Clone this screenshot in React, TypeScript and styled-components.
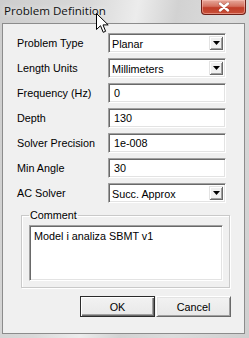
import React from "react";
import styled, { createGlobalStyle } from "styled-components";

const Global = createGlobalStyle`
  html, body { margin: 0; padding: 0; background: #d8d8d8; }
  * { box-sizing: border-box; }
`;

const Window = styled.div`
  position: relative;
  width: 249px;
  height: 338px;
  overflow: hidden;
  display: flex;
  flex-direction: column;
  padding: 0 4px 4px 2px;
  background: linear-gradient(100deg, #cdcdcd 0%, #d9d9d9 30%, #ececec 45%, #d2d2d2 58%, #dcdcdc 75%, #cfcfcf 100%);
  font-family: "Liberation Sans", Arial, sans-serif;
`;

const TitleBar = styled.div`
  height: 23px;
  display: flex;
  align-items: flex-start;
`;

const Title = styled.div`
  font-family: "Open Sans", "Noto Sans", sans-serif;
  font-size: 11.6px;
  line-height: 16px;
  color: #111;
  margin: 3px 0 0 2px;
  text-shadow: 0 0 6px rgba(255, 255, 255, 0.9);
`;

const CloseButton = styled.div`
  margin-left: auto;
  margin-right: -1px;
  width: 45px;
  height: 15px;
  border: 1px solid #6e2018;
  border-top: none;
  border-radius: 0 0 4px 4px;
  background: linear-gradient(#e6a99c 0%, #d4705e 45%, #c03d28 55%, #c8503a 100%);
  display: flex;
  align-items: center;
  justify-content: center;
  box-shadow: inset 0 0 0 1px rgba(255, 200, 190, 0.5);
`;

const Client = styled.div`
  width: 243px;
  border: 1px solid #8c8c8c;
  background: #f0f0f0;
  padding: 9px 13px 16px 14px;
  display: flex;
  flex-direction: column;
`;

const Form = styled.div`
  display: grid;
  grid-template-columns: 91px 118px;
  grid-auto-rows: 20px;
  row-gap: 5px;
  align-items: center;
`;

const Label = styled.div`
  font-size: 10.8px;
  color: #000;
  white-space: nowrap;
`;

const sunken = `
  background: #fff;
  border-top: 1px solid #a0a0a0;
  border-left: 1px solid #a0a0a0;
  border-right: 1px solid #fff;
  border-bottom: 1px solid #fff;
  box-shadow: inset 1px 1px 0 #696969, inset -1px -1px 0 #e3e3e3;
`;

const Combo = styled.div`
  ${sunken}
  height: 20px;
  display: flex;
  align-items: stretch;
  padding: 2px 2px 2px 3px;
`;

const FieldText = styled.div<{ $pad?: number }>`
  flex: 1;
  font-size: 10.8px;
  line-height: 16px;
  color: #000;
  padding-left: ${(p) => p.$pad ?? 0}px;
  white-space: nowrap;
`;

const ArrowButton = styled.div`
  width: 14px;
  background: #f0f0f0;
  box-shadow: inset 1px 1px 0 #e3e3e3, inset -1px -1px 0 #696969, inset 2px 2px 0 #fff, inset -2px -2px 0 #a0a0a0;
  display: flex;
  align-items: center;
  justify-content: center;
`;

const Edit = styled.div`
  ${sunken}
  height: 20px;
  display: flex;
  align-items: center;
  padding: 0 2px 0 4px;
`;

const GroupBox = styled.fieldset`
  margin: 6px 1px 0 4px;
  border: 1px solid #c9c9c9;
  box-shadow: 1px 1px 0 #fff, inset 1px 1px 0 #fff;
  padding: 3px 6px 6px 7px;
  min-width: 0;
`;

const Legend = styled.legend`
  font-size: 10.8px;
  line-height: 13px;
  padding: 0 1px;
  color: #000;
`;

const Memo = styled.div`
  ${sunken}
  height: 56px;
  padding: 4px 4px;
  font-size: 10.8px;
  line-height: 13px;
  color: #000;
`;

const ButtonRow = styled.div`
  margin-top: 8px;
  display: flex;
  justify-content: flex-end;
  gap: 1px;
`;

const Button = styled.div<{ $default?: boolean }>`
  width: 75px;
  height: 21px;
  display: flex;
  align-items: center;
  justify-content: center;
  font-size: 10.8px;
  color: #000;
  background: linear-gradient(#f2f2f2, #e8e8e8);
  border: 1px solid ${(p) => (p.$default ? "#2b2b2b" : "transparent")};
  box-shadow: ${(p) =>
    p.$default
      ? "inset 1px 1px 0 #fff, inset -1px -1px 0 #696969, inset -2px -2px 0 #a0a0a0"
      : "0 0 0 0 transparent"};
  ${(p) =>
    !p.$default &&
    `border-top-color:#fff;border-left-color:#fff;border-right-color:#696969;border-bottom-color:#696969;
     box-shadow: inset 1px 1px 0 #e3e3e3, inset -1px -1px 0 #a0a0a0;`}
`;

const Cursor = styled.svg`
  position: absolute;
  left: 96px;
  top: 13px;
`;

const Arrow = () => (
  <svg width="7" height="4" viewBox="0 0 7 4">
    <path d="M0 0H7L3.5 4Z" fill="#000" />
  </svg>
);

const rows: { label: string; value: string; combo?: boolean }[] = [
  { label: "Problem Type", value: "Planar", combo: true },
  { label: "Length Units", value: "Millimeters", combo: true },
  { label: "Frequency (Hz)", value: "0" },
  { label: "Depth", value: "130" },
  { label: "Solver Precision", value: "1e-008" },
  { label: "Min Angle", value: "30" },
  { label: "AC Solver", value: "Succ. Approx", combo: true },
];

export default function App() {
  return (
    <>
      <Global />
      <Window>
        <TitleBar>
          <Title>Problem Definition</Title>
          <CloseButton>
            <svg width="12" height="10" viewBox="0 0 12 10">
              <path d="M2 1.5L10 8.5M10 1.5L2 8.5" stroke="#5a1a12" strokeWidth="3.4" strokeLinecap="round" opacity="0.35" />
              <path d="M2 1.5L10 8.5M10 1.5L2 8.5" stroke="#fff" strokeWidth="2.4" strokeLinecap="round" />
            </svg>
          </CloseButton>
        </TitleBar>
        <Client>
          <Form>
            {rows.map((r) => (
              <React.Fragment key={r.label}>
                <Label>{r.label}</Label>
                {r.combo ? (
                  <Combo>
                    <FieldText>{r.value}</FieldText>
                    <ArrowButton>
                      <Arrow />
                    </ArrowButton>
                  </Combo>
                ) : (
                  <Edit>
                    <FieldText $pad={1}>{r.value}</FieldText>
                  </Edit>
                )}
              </React.Fragment>
            ))}
          </Form>
          <GroupBox>
            <Legend>Comment</Legend>
            <Memo>Model i analiza SBMT v1</Memo>
          </GroupBox>
          <ButtonRow>
            <Button $default>OK</Button>
            <Button>Cancel</Button>
          </ButtonRow>
        </Client>
        <Cursor width="13" height="21" viewBox="0 0 13 21">
          <path d="M0.5 0.5V16.5L4.5 12.7L7.2 19.3L9.6 18.3L7 11.9H12.2Z" fill="#fff" stroke="#000" strokeWidth="1" strokeLinejoin="miter" />
        </Cursor>
      </Window>
    </>
  );
}
